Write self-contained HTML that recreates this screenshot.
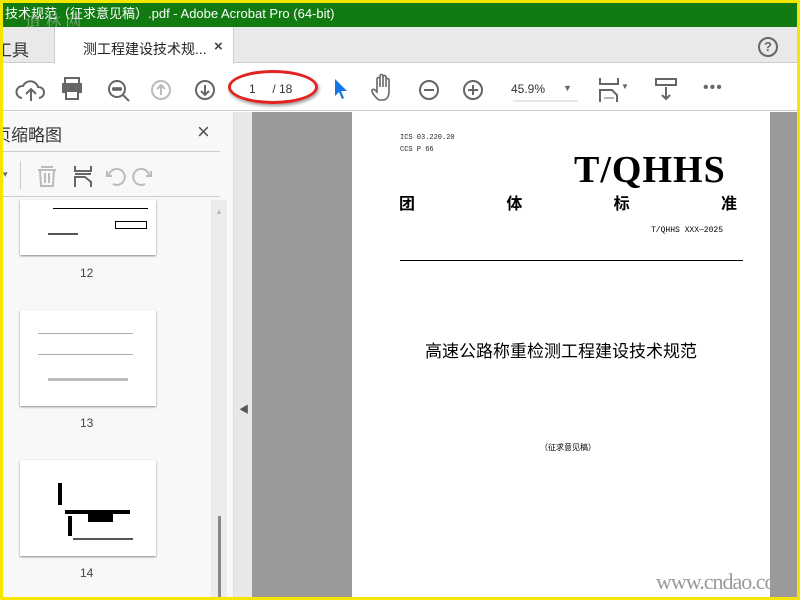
<!DOCTYPE html>
<html><head><meta charset="utf-8"><style>
*{margin:0;padding:0;box-sizing:border-box}
body{width:800px;height:600px;overflow:hidden;background:#f5e600;position:relative;font-family:"Liberation Sans","Noto Sans CJK SC",sans-serif}
.a{position:absolute}
</style></head><body>
<div class="a" style="left:3px;top:3px;width:794px;height:594px;background:#fff;overflow:hidden">
 <div class="a" style="left:0;top:0;width:794px;height:24px;background:#117a11;color:#fff;font-size:13px;line-height:22px;padding-left:2px;white-space:nowrap">技术规范（征求意见稿）.pdf - Adobe Acrobat Pro (64-bit)</div>
 <div class="a" style="left:22px;top:6px;color:rgba(200,200,200,.6);font-size:16px;font-family:'Noto Serif CJK SC',serif">道 林 网</div>
 <div class="a" style="left:0;top:24px;width:794px;height:36px;background:#e9e9e9;border-bottom:1px solid #ccc"></div>
 <div class="a" style="left:-8px;top:33px;font-size:17px;color:#333">工具</div>
 <div class="a" style="left:51px;top:24px;width:180px;height:37px;background:#fff;border-left:1px solid #ccc;border-right:1px solid #ccc"></div>
 <div class="a" style="left:80px;top:36px;font-size:14px;color:#222">测工程建设技术规...</div>
 <div class="a" style="left:211px;top:35px;font-size:15px;color:#444;font-weight:bold">×</div>
 <div class="a" style="left:755px;top:34px;width:20px;height:20px;border:2px solid #666;border-radius:50%;font-size:13px;font-weight:bold;color:#666;text-align:center;line-height:16px">?</div>
 <div class="a" style="left:0;top:61px;width:794px;height:47px;background:#fff;border-bottom:1px solid #ccc"></div>
 <svg class="a" style="left:0;top:61px" width="794" height="47" fill="none" stroke="#666" stroke-width="2">
  <path d="M19 34a6 6 0 0 1 1-12a8 8 0 0 1 15 1a5 5 0 0 1 1 11M28 37V25M23 30l5-5 5 5"/>
  <rect x="60" y="20" width="18" height="8" fill="#666"/><rect x="62" y="14" width="14" height="6" /><rect x="63" y="27" width="12" height="8" fill="#fff"/>
  <circle cx="114" cy="25" r="8"/><path d="M120 31l6 6"/><circle cx="111" cy="25" r="1" fill="#666"/><circle cx="114" cy="25" r="1" fill="#666"/><circle cx="117" cy="25" r="1" fill="#666"/>
  <circle cx="158" cy="26" r="9" stroke="#bbb"/><path d="M158 31V21M154 25l4-4 4 4" stroke="#bbb"/>
  <circle cx="202" cy="26" r="9"/><path d="M202 21v10M198 27l4 4 4-4"/>
  <path d="M376 36c-4-3-7-7-7-9 0-2 2-2 3-1l2 2V15c0-2 3-2 3 0v8V12c0-2 3-2 3 0v11V13c0-2 3-2 3 0v10V16c0-2 3-2 3 0v11c0 5-2 9-6 9z" stroke-width="1.6"/>
  <circle cx="426" cy="26" r="9"/><path d="M421 26h10"/>
  <circle cx="470" cy="26" r="9"/><path d="M465 26h10M470 21v10"/>
  <path d="M510 37h65" stroke="#ccc" stroke-width="1"/>
  <path d="M597 14v6h18v-6M597 38V26h12l5 5v7" /><path d="M601 34h10" stroke-width="1"/>
  <rect x="653" y="15" width="20" height="6" stroke-width="2"/><path d="M663 23v12M659 31l4 4 4-4"/>
 </svg>
 <svg class="a" style="left:330px;top:75px" width="16" height="22"><path d="M2 1v17l4-4 3 7 2-1-3-7h6z" fill="#1473e6"/></svg>
 <div class="a" style="left:225px;top:67px;width:90px;height:34px;border:3px solid #e32222;border-radius:50%;box-shadow:1px 2px 3px #999"></div>
 <div class="a" style="left:246px;top:79px;font-size:12px;color:#333">1&nbsp;&nbsp;&nbsp;&nbsp;&nbsp;/ 18</div>
 <div class="a" style="left:508px;top:79px;font-size:12px;color:#333">45.9%</div>
 <div class="a" style="left:560px;top:80px;font-size:9px;color:#666">▼</div>
 <div class="a" style="left:618px;top:79px;font-size:8px;color:#666">▼</div>
 <div class="a" style="left:700px;top:76px;font-size:16px;color:#666;letter-spacing:1px">•••</div>
 <div class="a" style="left:0;top:109px;width:230px;height:485px;background:#f8f8f8"></div>
 <div class="a" style="left:-9px;top:118px;font-size:17px;color:#333">页缩略图</div>
 <div class="a" style="left:194px;top:116px;font-size:22px;color:#555">×</div>
 <div class="a" style="left:0;top:148px;width:217px;height:1px;background:#ccc"></div>
 <div class="a" style="left:0;top:193px;width:217px;height:1px;background:#ccc"></div>
 <div class="a" style="left:0;top:166px;font-size:9px;color:#666">▾</div>
 <div class="a" style="left:17px;top:158px;width:1px;height:28px;background:#ccc"></div>
 <svg class="a" style="left:30px;top:158px" width="140" height="30" fill="none" stroke="#bbb" stroke-width="2">
  <path d="M8 6h12M5 9h18M7 9l1 16h12l1-16M12 12v10M16 12v10"/>
  <path d="M42 5v5h16V5M42 13h16M42 26V16h10l6 5v5" stroke="#666"/>
  <path d="M80 23a8 8 0 1 0-4-9M74 10v5h5"/>
  <path d="M112 23a8 8 0 1 1 4-9M118 10v5h-5"/>
 </svg>
 <div class="a" style="left:17px;top:197px;width:136px;height:55px;background:#fff;box-shadow:0 1px 2px #888"></div>
 <div class="a" style="left:50px;top:205px;width:95px;height:1px;background:#000"></div>
 <div class="a" style="left:112px;top:218px;width:32px;height:8px;border:1px solid #000"></div>
 <div class="a" style="left:45px;top:230px;width:30px;height:2px;background:#555"></div>
 <div class="a" style="left:77px;top:263px;font-size:12px;color:#444">12</div>
 <div class="a" style="left:17px;top:307px;width:136px;height:96px;background:#fff;box-shadow:0 1px 2px #888"></div>
 <div class="a" style="left:35px;top:330px;width:95px;height:22px;border-top:1px solid #aaa;border-bottom:1px solid #aaa"></div>
 <div class="a" style="left:45px;top:375px;width:80px;height:3px;background:#bbb"></div>
 <div class="a" style="left:77px;top:413px;font-size:12px;color:#444">13</div>
 <div class="a" style="left:17px;top:457px;width:136px;height:96px;background:#fff;box-shadow:0 1px 2px #888"></div>
 <div class="a" style="left:55px;top:480px;width:4px;height:22px;background:#000"></div>
 <div class="a" style="left:62px;top:507px;width:65px;height:4px;background:#000"></div>
 <div class="a" style="left:65px;top:513px;width:4px;height:20px;background:#000"></div>
 <div class="a" style="left:85px;top:511px;width:25px;height:8px;background:#000"></div>
 <div class="a" style="left:70px;top:535px;width:60px;height:2px;background:#555"></div>
 <div class="a" style="left:77px;top:563px;font-size:12px;color:#444">14</div>
 <div class="a" style="left:208px;top:197px;width:16px;height:397px;background:#ececec"></div>
 <div class="a" style="left:212px;top:204px;font-size:8px;color:#bbb">▲</div>
 <div class="a" style="left:215px;top:513px;width:3px;height:81px;background:#888"></div>
 <div class="a" style="left:230px;top:109px;width:19px;height:485px;background:#e8e8e8;border-left:1px solid #ddd"></div>
 <div class="a" style="left:236px;top:398px;font-size:10px;color:#555">◀</div>
 <div class="a" style="left:249px;top:109px;width:545px;height:485px;background:#9a9a9a"></div>
 <div class="a" style="left:349px;top:109px;width:418px;height:485px;background:#fff"></div>
 <div class="a" style="left:397px;top:129px;font-size:7px;line-height:12px;color:#222;font-family:'Liberation Mono',monospace">ICS 03.220.20<br>CCS P 66</div>
 <div class="a" style="left:571px;top:145px;font-size:38px;font-weight:bold;color:#000;font-family:'Liberation Serif',serif;letter-spacing:1px;line-height:44px">T/QHHS</div>
 <div class="a" style="left:396px;top:187px;width:338px;display:flex;justify-content:space-between;font-size:16px;font-weight:bold;color:#000"><span>团</span><span>体</span><span>标</span><span>准</span></div>
 <div class="a" style="left:648px;top:223px;font-size:8px;color:#000;font-family:'Liberation Mono',monospace">T/QHHS XXX—2025</div>
 <div class="a" style="left:397px;top:257px;width:343px;height:1px;background:#000"></div>
 <div class="a" style="left:422px;top:334px;font-size:17px;color:#000">高速公路称重检测工程建设技术规范</div>
 <div class="a" style="left:537px;top:439px;font-size:8px;color:#000">（征求意见稿）</div>
 <div class="a" style="left:653px;top:566px;font-size:22px;color:#999;font-family:'Liberation Serif',serif;white-space:nowrap;letter-spacing:-1px;width:114px;overflow:hidden">www.cndao.com</div>
</div>
</body></html>
